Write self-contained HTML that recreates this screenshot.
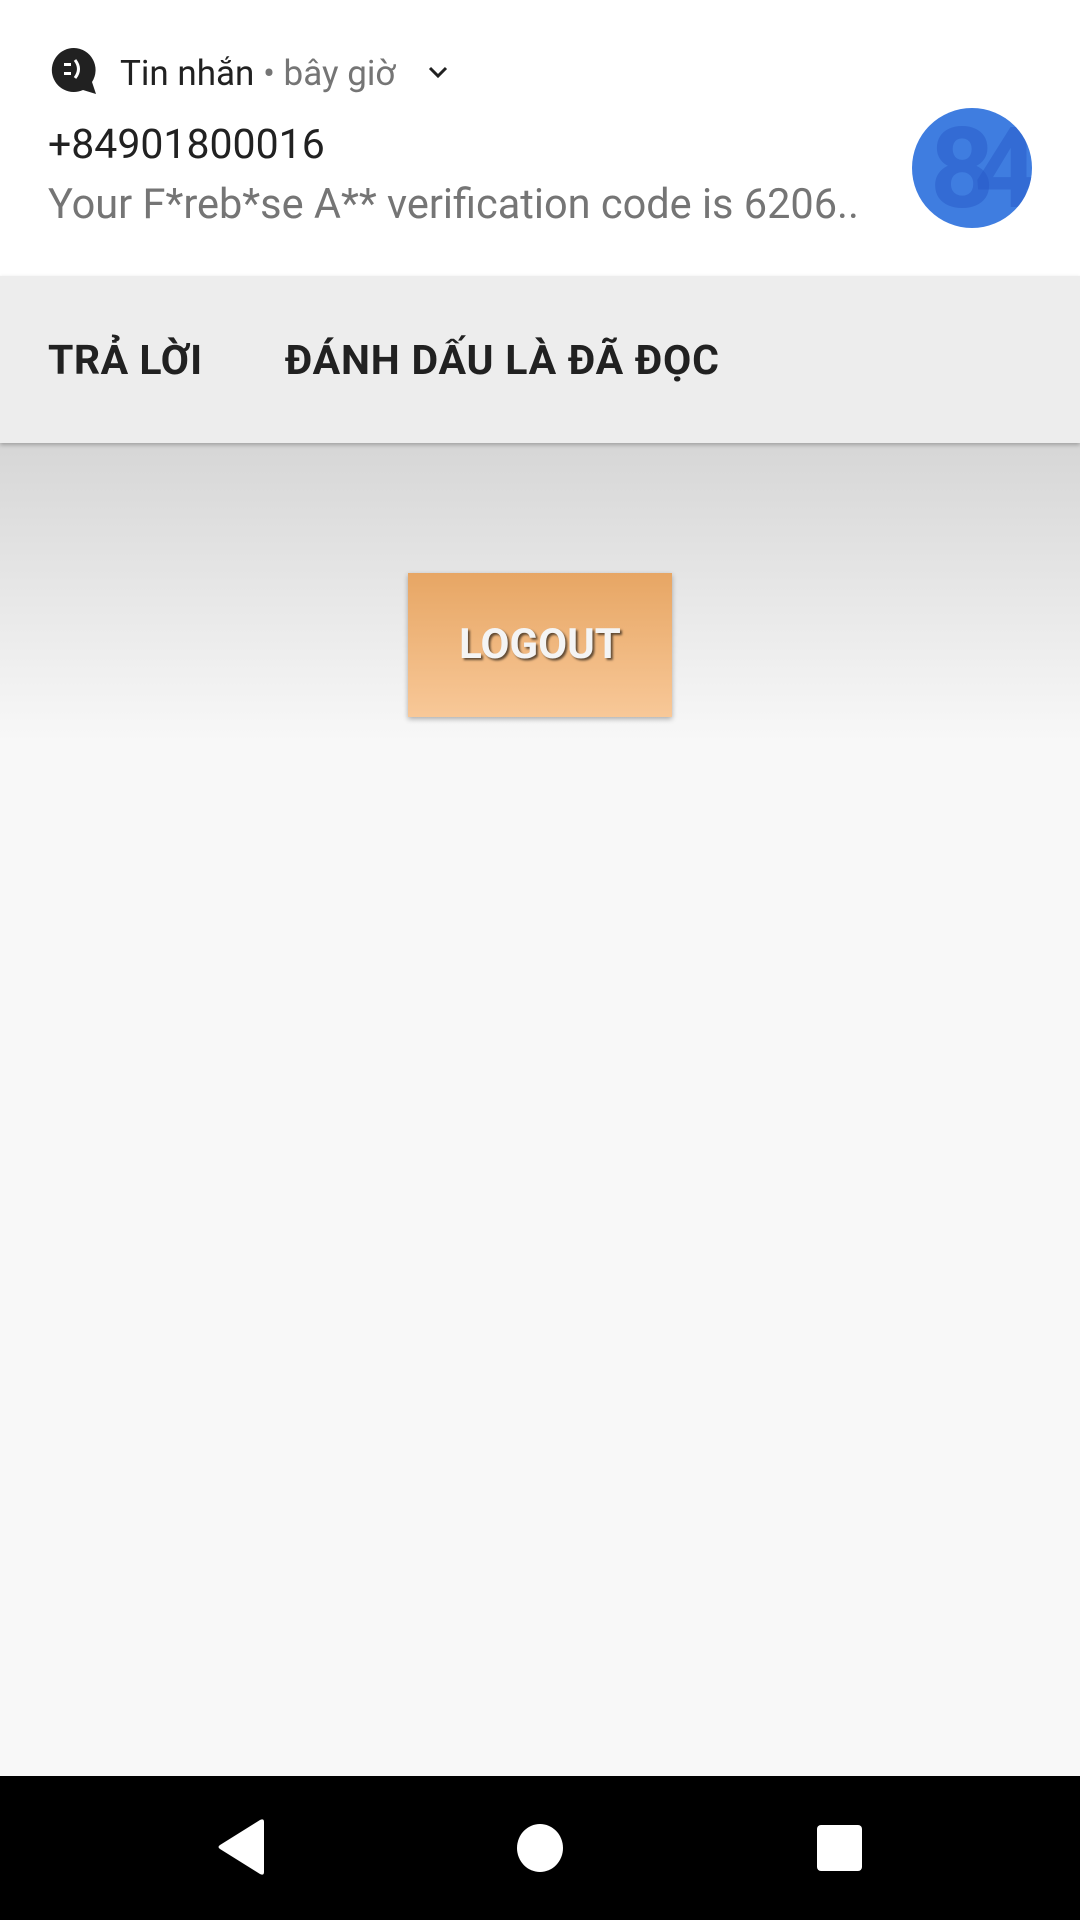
<!DOCTYPE html>
<html><head><meta charset="utf-8"><style>
body{margin:0;width:1080px;height:1920px;position:relative;overflow:hidden;background:#f8f8f8;font-family:"Roboto","Liberation Sans",sans-serif}
.n{position:absolute;left:0;top:0;width:1080px;height:276px;background:#fff}
.a{position:absolute;left:0;top:276px;width:1080px;height:167px;background:#ededed;box-shadow:0 2px 4px rgba(0,0,0,.25)}
.g{position:absolute;left:0;top:443px;width:1080px;height:300px;background:linear-gradient(#d6d6d6,#f8f8f8)}
.t{position:absolute;white-space:nowrap}
.btn{position:absolute;left:408px;top:573px;width:264px;height:144px;background:linear-gradient(#e7a664,#f8c898);box-shadow:0 2px 5px rgba(0,0,0,.3);color:#f4f4f4;font-weight:bold;font-size:42px;text-align:center;line-height:144px;text-shadow:2px 2px 2px rgba(0,0,0,.6)}
.nav{position:absolute;left:0;top:1776px;width:1080px;height:144px;background:#000}
</style></head><body>
<div class="n">
<svg style="position:absolute;left:51px;top:48px" width="48" height="46" viewBox="0 0 48 46"><path d="M23 0A22 22 0 1 0 32 42L45 46 41 34A22 22 0 0 0 23 0Z" fill="#212121"/><rect x="13" y="15" width="7" height="3" fill="#fff"/><rect x="13" y="24" width="7" height="3" fill="#fff"/><path d="M24 12Q31 21 24 30" stroke="#fff" stroke-width="3" fill="none"/></svg>
<div class="t" style="left:120px;top:53px;font-size:35px;color:#212121">Tin nhắn <span style="color:#757575">• bây giờ</span></div>
<svg style="position:absolute;left:428px;top:66px" width="20" height="14"><path d="M2 2L10 10 18 2" stroke="#212121" stroke-width="3" fill="none"/></svg>
<div class="t" style="left:48px;top:121px;font-size:41px;color:#212121">+84901800016</div>
<div class="t" style="left:48px;top:180px;font-size:41.5px;color:#757575">Your F*reb*se A** verification code is 6206..</div>
<div style="position:absolute;left:912px;top:108px;width:120px;height:120px;border-radius:50%;background:#3f7de0;overflow:hidden"><div style="position:absolute;left:18px;top:-4px;font-size:112px;font-weight:bold;color:rgba(40,90,200,.5);letter-spacing:-20px">84</div></div>
</div>
<div class="g"></div>
<div class="a">
<div class="t" style="left:48px;top:61px;font-size:41px;font-weight:bold;color:#212121;letter-spacing:0.5px">TRẢ LỜI</div>
<div class="t" style="left:285px;top:61px;font-size:41px;font-weight:bold;color:#212121;letter-spacing:0.8px">ĐÁNH DẤU LÀ ĐÃ ĐỌC</div>
</div>
<div class="btn">LOGOUT</div>
<div class="nav">
<svg style="position:absolute;left:214px;top:42px" width="54" height="60"><path d="M50 4L50 54Q50 58 46 56L6 31Q3 29 6 27L46 2Q50 0 50 4Z" fill="#fff"/></svg>
<div style="position:absolute;left:517px;top:48px;width:46px;height:48px;border-radius:50%;background:#fff"></div>
<div style="position:absolute;left:817px;top:49px;width:45px;height:46px;border-radius:4px;background:#fff"></div>
</div>
</body></html>
